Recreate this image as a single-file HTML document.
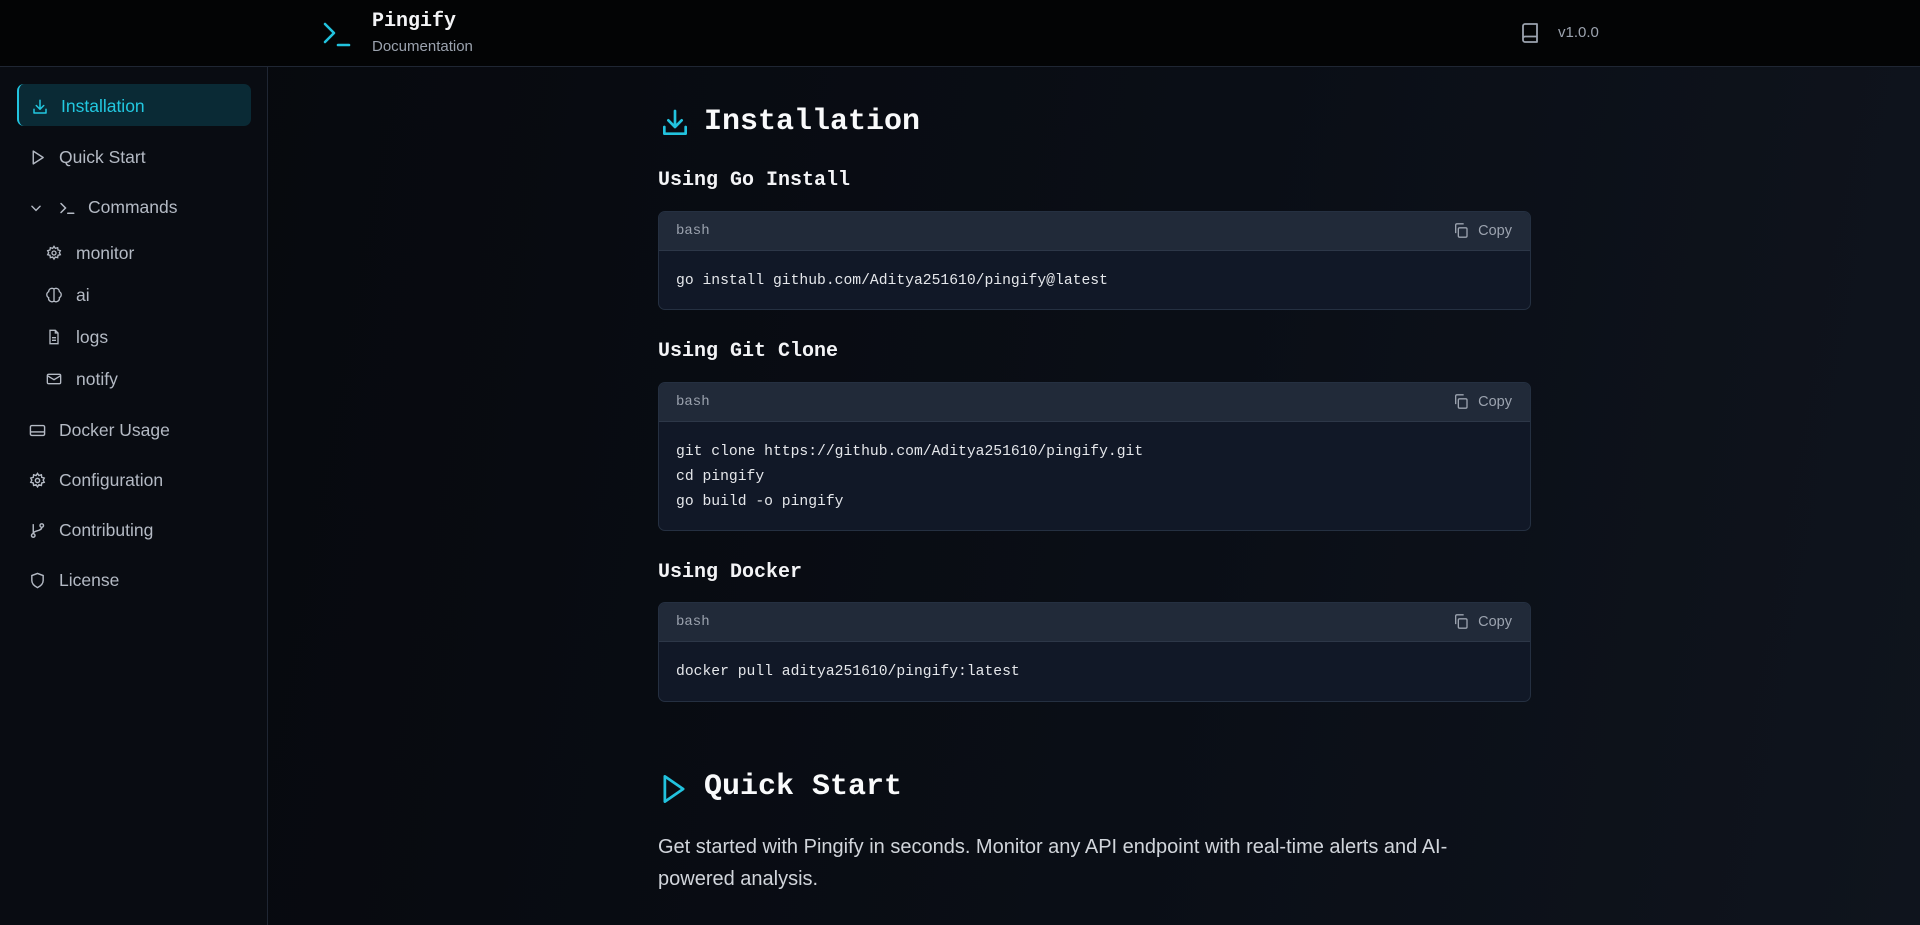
<!DOCTYPE html>
<html><head><meta charset="utf-8"><style>
*{box-sizing:border-box;margin:0;padding:0}
body{width:1920px;height:925px;overflow:hidden;background:linear-gradient(100deg,#06080c 0%,#0a0e16 60%,#0f141d 100%);font-family:"Liberation Sans",sans-serif;color:#d1d5db;position:relative}
.hdr{position:absolute;left:0;top:0;width:1920px;height:67px;background:#030405;border-bottom:1px solid #1f2633}
.side{position:absolute;left:0;top:67px;width:268px;height:858px;background:#090c12;border-right:1px solid #1f2633}
.abs{position:absolute;white-space:nowrap}
.nav{position:absolute;left:29px;font-size:17.5px;color:#b4bac4;line-height:20px;white-space:nowrap}
.nav svg,.sub svg{position:absolute;left:0;top:2px}
.nav span{position:absolute;left:30px;top:0;white-space:nowrap}
.sub{position:absolute;left:46px;font-size:17.5px;color:#b4bac4;line-height:20px;white-space:nowrap}
.sub span{position:absolute;left:30px;top:0;white-space:nowrap}
.mono{font-family:"Liberation Mono",monospace}
h2{position:absolute;left:658px;font-family:"Liberation Mono",monospace;font-size:20px;font-weight:bold;color:#f3f4f6;line-height:24px}
.blk{position:absolute;left:658px;width:873px;background:#111827;border:1px solid #253041;border-radius:7px;overflow:hidden}
.bh{height:39px;background:#212a39;border-bottom:1px solid #2d3748;position:relative}
.bh .l{position:absolute;left:17px;top:11px;font-family:"Liberation Mono",monospace;font-size:14px;color:#9ca3af}
.bh .c{position:absolute;right:18px;top:11px;font-size:14.5px;color:#9ca3af}
.bh .c svg{position:absolute;left:-25px;top:-1px}
.code{padding:0 17px;font-family:"Liberation Mono",monospace;font-size:14.7px;color:#e5e7eb;line-height:25px}
</style></head><body>
<div class="hdr">
<svg class="abs" style="left:322px;top:19px" width="30" height="30" viewBox="0 0 30 30" fill="none" stroke="#22c3de" stroke-width="2.6" stroke-linecap="round" stroke-linejoin="round"><path d="M3 5l9 9-9 9"/><path d="M16 26h11"/></svg>
<div class="abs mono" style="left:372px;top:10px;font-size:20px;font-weight:bold;color:#f3f4f6">Pingify</div>
<div class="abs" style="left:372px;top:38px;font-size:15px;color:#9ca3af">Documentation</div>
<svg class="abs" style="left:1520px;top:22px" width="20" height="22" viewBox="0 0 20 22" fill="none" stroke="#9ca3af" stroke-width="1.8" stroke-linejoin="round"><path d="M3 18V4a2 2 0 012-2h12v18H5a2 2 0 01-2-2zM3 16.5a2 2 0 012-2h12"/></svg>
<div class="abs" style="left:1558px;top:24px;font-size:15px;color:#9ca3af">v1.0.0</div>
</div>
<div class="side">
<div class="abs" style="left:17px;top:17px;width:234px;height:42px;background:#0a2a35;border-left:2px solid #22c3de;border-radius:7px"></div>
<div class="nav" style="top:29px;color:#22c8e0;left:31px"><svg width="18" height="18" viewBox="0 0 24 24" fill="none" stroke="#22c8e0" stroke-width="2" stroke-linecap="round" stroke-linejoin="round"><path d="M12 3v12M7 10l5 5 5-5M4 15v5h16v-5"/></svg><span style="left:30px">Installation</span></div>
<div class="nav" style="top:80px"><svg width="17" height="17" viewBox="0 0 24 24" fill="none" stroke="#b4bac4" stroke-width="2" stroke-linejoin="round"><path d="M6 3l14 9-14 9z"/></svg><span>Quick Start</span></div>
<div class="nav" style="top:130px"><svg width="14" height="14" viewBox="0 0 24 24" fill="none" stroke="#b4bac4" stroke-width="2.4" stroke-linecap="round" style="top:4px"><path d="M5 9l7 7 7-7"/></svg><svg width="18" height="18" viewBox="0 0 24 24" fill="none" stroke="#b4bac4" stroke-width="2" stroke-linecap="round" style="left:29px"><path d="M4 6l6 6-6 6M13 19h8"/></svg><span style="left:59px">Commands</span></div>
<div class="sub" style="top:176px"><svg width="16" height="16" viewBox="0 0 24 24" fill="none" stroke="#b4bac4" stroke-width="2"><circle cx="12" cy="12" r="3"/><path d="M12 2l2 3 3.5-1 .5 3.5 3.5 1-1.5 3 1.5 3-3.5 1-.5 3.5-3.5-1-2 3-2-3-3.5 1-.5-3.5-3.5-1 1.5-3-1.5-3 3.5-1 .5-3.5 3.5 1z"/></svg><span>monitor</span></div>
<div class="sub" style="top:218px"><svg width="16" height="16" viewBox="0 0 24 24" fill="none" stroke="#b4bac4" stroke-width="2"><path d="M12 3a5 5 0 00-8 4 5 5 0 000 9 5 5 0 008 5 5 5 0 008-5 5 5 0 000-9 5 5 0 00-8-4zM12 3v18"/></svg><span>ai</span></div>
<div class="sub" style="top:260px"><svg width="16" height="16" viewBox="0 0 24 24" fill="none" stroke="#b4bac4" stroke-width="2"><path d="M14 2H6v20h12V6zM14 2v4h4M9 13h6M9 17h6"/></svg><span>logs</span></div>
<div class="sub" style="top:302px"><svg width="16" height="16" viewBox="0 0 24 24" fill="none" stroke="#b4bac4" stroke-width="2"><rect x="2" y="5" width="20" height="14" rx="2"/><path d="M2 7l10 6 10-6"/></svg><span>notify</span></div>
<div class="nav" style="top:353px"><svg width="17" height="17" viewBox="0 0 24 24" fill="none" stroke="#b4bac4" stroke-width="2"><rect x="2" y="5" width="20" height="14" rx="2"/><path d="M2 14h20"/></svg><span>Docker Usage</span></div>
<div class="nav" style="top:403px"><svg width="17" height="17" viewBox="0 0 24 24" fill="none" stroke="#b4bac4" stroke-width="2"><circle cx="12" cy="12" r="3"/><path d="M12 2l2 3 3.5-1 .5 3.5 3.5 1-1.5 3 1.5 3-3.5 1-.5 3.5-3.5-1-2 3-2-3-3.5 1-.5-3.5-3.5-1 1.5-3-1.5-3 3.5-1 .5-3.5 3.5 1z"/></svg><span>Configuration</span></div>
<div class="nav" style="top:453px"><svg width="17" height="17" viewBox="0 0 24 24" fill="none" stroke="#b4bac4" stroke-width="2"><circle cx="6" cy="19" r="2.5"/><circle cx="18" cy="5" r="2.5"/><path d="M6 3v13.5M18 7.5c0 6-12 4-12 9"/></svg><span>Contributing</span></div>
<div class="nav" style="top:503px"><svg width="17" height="17" viewBox="0 0 24 24" fill="none" stroke="#b4bac4" stroke-width="2"><path d="M12 2l8 3v7c0 5-4 8-8 10-4-2-8-5-8-10V5z"/></svg><span>License</span></div>
</div>

<svg class="abs" style="left:659px;top:107px" width="32" height="32" viewBox="0 0 24 24" fill="none" stroke="#22c3de" stroke-width="2" stroke-linecap="round" stroke-linejoin="round"><path d="M12 3v12M7 10l5 5 5-5M4 15v5h16v-5"/></svg>
<div class="abs mono" style="left:704px;top:105px;font-size:30px;font-weight:bold;color:#f9fafb">Installation</div>

<h2 style="top:169px">Using Go Install</h2>
<div class="blk" style="top:211px;height:99px"><div class="bh"><span class="l">bash</span><span class="c"><svg width="16" height="17" viewBox="0 0 24 24" fill="none" stroke="#9ca3af" stroke-width="2"><rect x="8" y="8" width="13" height="14" rx="2"/><path d="M4 16V4a2 2 0 012-2h10"/></svg>Copy</span></div><div class="code" style="padding-top:18px">go install github.com/Aditya251610/pingify@latest</div></div>

<h2 style="top:340px">Using Git Clone</h2>
<div class="blk" style="top:382px;height:149px"><div class="bh"><span class="l">bash</span><span class="c"><svg width="16" height="17" viewBox="0 0 24 24" fill="none" stroke="#9ca3af" stroke-width="2"><rect x="8" y="8" width="13" height="14" rx="2"/><path d="M4 16V4a2 2 0 012-2h10"/></svg>Copy</span></div><div class="code" style="padding-top:18px">git clone https://github.com/Aditya251610/pingify.git<br>cd pingify<br>go build -o pingify</div></div>

<h2 style="top:561px">Using Docker</h2>
<div class="blk" style="top:602px;height:100px"><div class="bh"><span class="l">bash</span><span class="c"><svg width="16" height="17" viewBox="0 0 24 24" fill="none" stroke="#9ca3af" stroke-width="2"><rect x="8" y="8" width="13" height="14" rx="2"/><path d="M4 16V4a2 2 0 012-2h10"/></svg>Copy</span></div><div class="code" style="padding-top:18px">docker pull aditya251610/pingify:latest</div></div>

<svg class="abs" style="left:660px;top:773px" width="28" height="32" viewBox="0 0 24 28" fill="none" stroke="#22c3de" stroke-width="2.4" stroke-linejoin="round"><path d="M4 3l16 11-16 11z"/></svg>
<div class="abs mono" style="left:704px;top:770px;font-size:30px;font-weight:bold;color:#f9fafb">Quick Start</div>
<div class="abs" style="left:658px;top:831px;width:900px;white-space:normal;font-size:20px;line-height:32px;color:#d1d5db">Get started with Pingify in seconds. Monitor any API endpoint with real-time alerts and AI-<br>powered analysis.</div>
</body></html>
